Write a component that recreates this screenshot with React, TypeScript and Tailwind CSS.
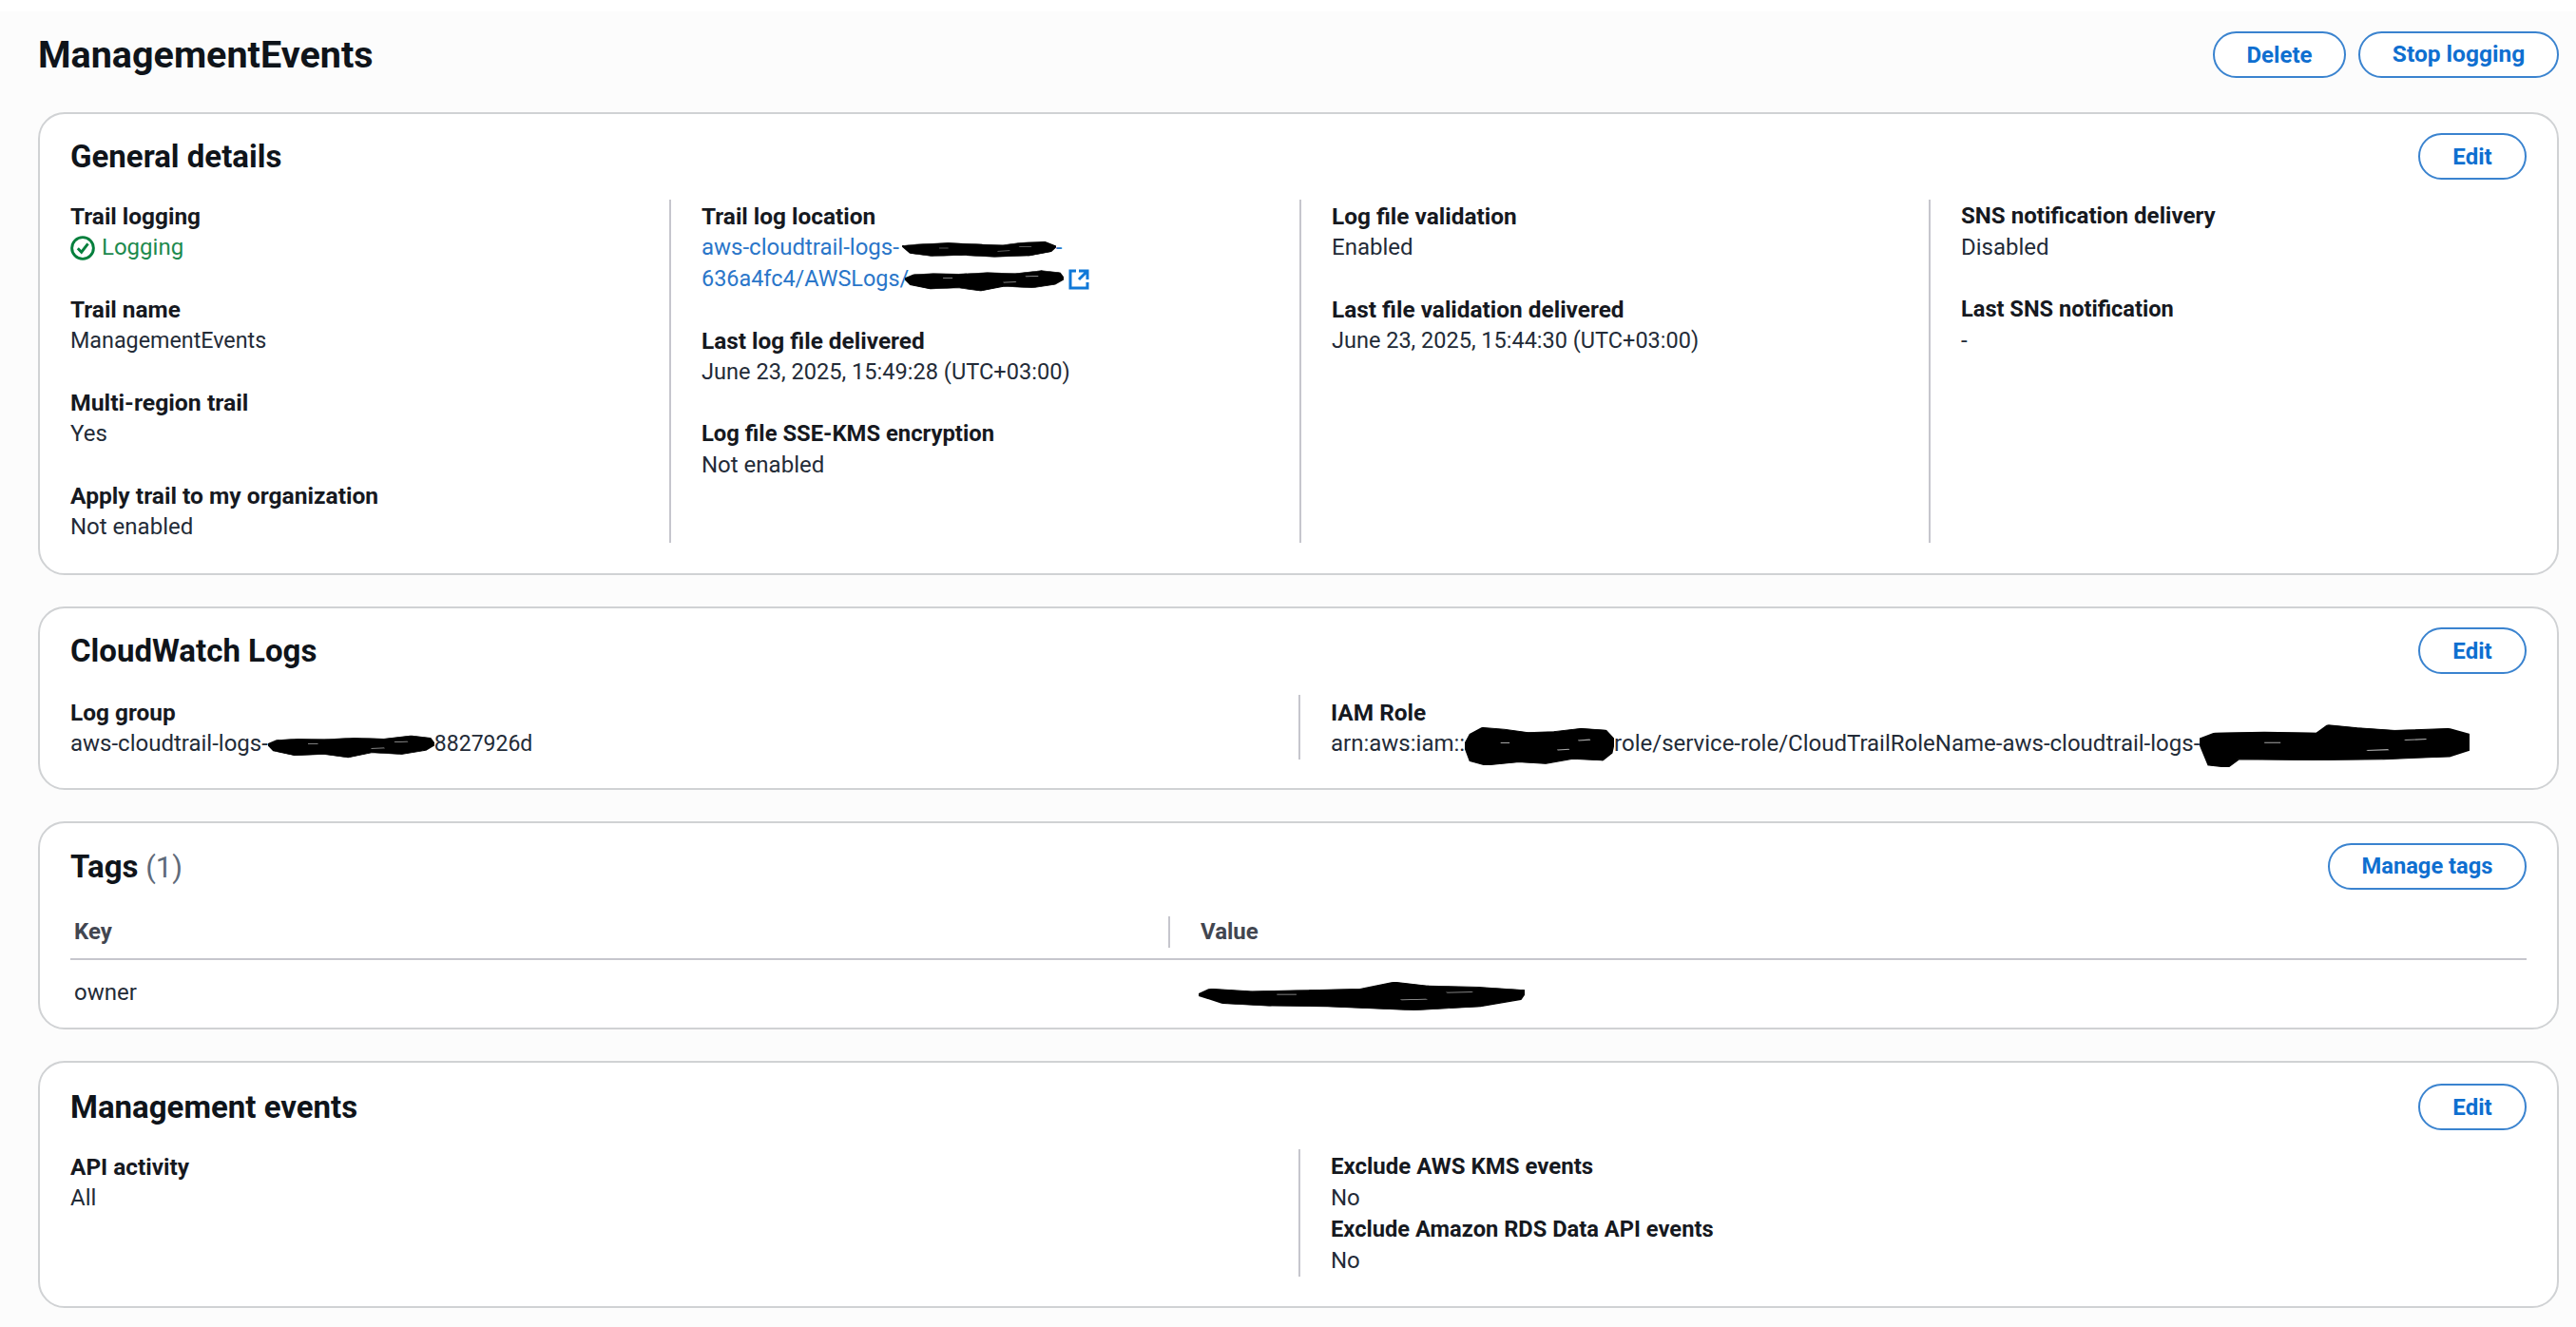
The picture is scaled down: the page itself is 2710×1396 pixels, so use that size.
import React from "react";

const FONT = "font-['Roboto','Noto_Sans',sans-serif]";

function Btn({ children, w, text = "text-[24px]" }: { children: React.ReactNode; w: string; text?: string }) {
  return (
    <button className={`${w} h-[49px] shrink-0 rounded-full border-2 border-[#3a83cf] bg-white ${text} font-bold leading-none text-[#0f6fd0]`}>
      {children}
    </button>
  );
}

function Field({ label, labelClass = "text-[24.4px]", children }: { label: string; labelClass?: string; children: React.ReactNode }) {
  return (
    <div>
      <div className={`${labelClass} font-bold leading-[33px] text-[#16191f]`}>{label}</div>
      <div className="text-[24px] leading-[33px] text-[#232b37]">{children}</div>
    </div>
  );
}

const BLOTS = {
  bar: "M0 46 L6 30 L18 26 L34 28 L52 22 L70 26 L86 14 L97 22 L100 48 L94 70 L80 84 L62 78 L48 96 L34 84 L16 88 L4 72Z",
  cap: "M0 50 L4 22 L12 6 L26 10 L42 18 L60 16 L78 8 L94 12 L100 36 L98 70 L92 88 L72 84 L54 96 L36 92 L14 100 L4 90Z",
  sm: "M0 30 L10 22 L30 14 L52 22 L66 26 L78 12 L92 6 L100 34 L96 66 L82 90 L60 96 L38 86 L20 92 L6 76Z",
  tail: "M0 36 L6 22 L24 20 L44 22 L48 4 L58 10 L72 16 L92 12 L99 24 L100 60 L92 76 L68 82 L42 84 L14 82 L10 100 L4 96 L2 66Z",
  fish: "M0 46 L4 26 L16 34 L34 30 L50 26 L60 4 L70 16 L86 20 L100 30 L98 62 L86 84 L66 96 L40 84 L22 82 L8 74Z",
};

function Blot({ w, h, kind, className = "" }: { w: number; h: number; kind: keyof typeof BLOTS; className?: string }) {
  return (
    <svg
      width={w}
      height={h}
      viewBox="0 0 100 100"
      preserveAspectRatio="none"
      className={`inline-block my-[-12px] align-middle ${className}`}
    >
      <path d={BLOTS[kind]} fill="#000" stroke="#000" strokeWidth="2" strokeLinejoin="round" />
      <path d="M62 62 L70 60 M76 38 L84 36 M24 44 L30 44" stroke="#fff" strokeWidth="2.5" opacity="0.65" fill="none" />
    </svg>
  );
}

function Card({ title, count, action, actionW = "w-[114px]", actionText, children, bottom, top = "pt-5" }: {
  title: string;
  count?: string;
  action: string;
  actionW?: string;
  actionText?: string;
  children: React.ReactNode;
  bottom: string;
  top?: string;
}) {
  return (
    <section className={`rounded-[28px] border-2 border-[#d0d2d4] bg-white px-8 ${top} ${bottom}`}>
      <div className="flex h-[49px] items-center justify-between">
        <h2 className="text-[33px] font-bold leading-none text-[#0f141a]">
          {title}
          {count && <span className="text-[31px] font-normal text-[#5f6b7a]"> {count}</span>}
        </h2>
        <Btn w={actionW} text={actionText}>{action}</Btn>
      </div>
      {children}
    </section>
  );
}

export default function App() {
  return (
    <div className={`${FONT} min-h-[1396px] bg-[#fcfcfc]`}>
      <div className="h-3 bg-white" />
      <div className="pl-10 pr-[18px]">
        <header className="flex h-[49px] items-center justify-between mt-[21px] mb-9">
          <h1 className="text-[39.5px] font-bold leading-none text-[#0f141a]">ManagementEvents</h1>
          <div className="flex gap-[13px]">
            <Btn w="w-[140px]">Delete</Btn>
            <Btn w="w-[211px]" text="text-[24.5px]">Stop logging</Btn>
          </div>
        </header>

        <div className="flex flex-col gap-[33px]">
          <Card title="General details" action="Edit" bottom="pb-[33px]">
            <div className="mt-[21px] grid h-[360px] grid-cols-[630px_663px_662px_1fr]">
              <div className="flex flex-col gap-8 pt-[1px]">
                <div>
                  <div className="text-[24.4px] font-bold leading-[33px] text-[#16191f]">Trail logging</div>
                  <div className="flex items-center gap-[7px] text-[24px] leading-[33px] text-[#1d8a4e]">
                    <svg width="26" height="26" viewBox="0 0 16 16" fill="none" stroke="#037f3c" strokeWidth="1.8">
                      <circle cx="8" cy="8" r="7" />
                      <path d="M4.8 8.2 7.2 10.6 11.4 5.2" />
                    </svg>
                    Logging
                  </div>
                </div>
                <Field label="Trail name"><span className="text-[23.3px]">ManagementEvents</span></Field>
                <Field label="Multi-region trail" labelClass="text-[24.8px]">Yes</Field>
                <Field label="Apply trail to my organization" labelClass="text-[24.6px]">Not enabled</Field>
              </div>
              <div className="flex flex-col gap-8 border-l-2 border-[#c6c6cd] pl-8 pt-[1px]">
                <div>
                  <div className="text-[24.4px] font-bold leading-[33px] text-[#16191f]">Trail log location</div>
                  <div className="text-[24px] leading-[33px] text-[#2a76c9]">
                    <div className="whitespace-nowrap">aws-cloudtrail-logs-<Blot w={162} h={18} kind="sm" className="ml-[3px]" />-</div>
                    <div className="flex items-center whitespace-nowrap">
                      <span className="text-[23.4px]">636a4fc4/AWSLogs/</span><Blot w={167} h={26} kind="bar" className="ml-[-4px]" />
                      <svg width="24" height="24" viewBox="0 0 16 16" fill="none" stroke="#0f78d8" strokeWidth="2" className="ml-[4px]">
                        <path d="M14 8.01v-6H8M14.02 2 8 8.01M6 2.01H2v12h12v-3.99" />
                      </svg>
                    </div>
                  </div>
                </div>
                <Field label="Last log file delivered"><span className="text-[23.6px]">June 23, 2025, 15:49:28 (UTC+03:00)</span></Field>
                <Field label="Log file SSE-KMS encryption" labelClass="text-[23.8px]">Not enabled</Field>
              </div>
              <div className="flex flex-col gap-8 border-l-2 border-[#c6c6cd] pl-8 pt-[1px]">
                <Field label="Log file validation">Enabled</Field>
                <Field label="Last file validation delivered"><span className="text-[23.5px]">June 23, 2025, 15:44:30 (UTC+03:00)</span></Field>
              </div>
              <div className="flex flex-col gap-8 border-l-2 border-[#c6c6cd] pl-8 pt-[1px]">
                <Field label="SNS notification delivery" labelClass="text-[24.1px]">Disabled</Field>
                <Field label="Last SNS notification" labelClass="text-[23.6px]">-</Field>
              </div>
            </div>
          </Card>

          <Card title="CloudWatch Logs" action="Edit" bottom="pb-[32px]">
            <div className="mt-[22px] grid h-[66px] grid-cols-[1292px_1fr]">
              <div className="pt-[2px]">
                <Field label="Log group">
                  <span className="whitespace-nowrap">aws-cloudtrail-logs-<Blot w={175} h={28} kind="bar" /><span className="text-[23px]">8827926d</span></span>
                </Field>
              </div>
              <div className="border-l-2 border-[#c6c6cd] pl-8 pt-[2px]">
                <Field label="IAM Role">
                  <span className="whitespace-nowrap">
                    arn:aws:iam::<Blot w={157} h={42} kind="cap" />role/service-role/CloudTrailRoleName-aws-cloudtrail-logs-<Blot w={284} h={46} kind="tail" />
                  </span>
                </Field>
              </div>
            </div>
          </Card>

          <Card title="Tags" count="(1)" action="Manage tags" actionW="w-[209px]" actionText="text-[23.7px]" bottom="pb-[18px]" top="pt-[21px]">
            <div className="mt-[28px] grid h-[46px] grid-cols-[1151px_1fr] border-b-2 border-[#c6c6cd] pl-[4px] pb-[11px] text-[24px] font-bold leading-[33px] text-[#424650]">
              <div>Key</div>
              <div className="border-l-2 border-[#c6c6cd] pl-8">Value</div>
            </div>
            <div className="grid grid-cols-[1151px_1fr] pl-[4px] pt-[17px] text-[24px] leading-[33px] text-[#232b37]">
              <div className="pt-[1px]">owner</div>
              <div className="pl-[32px] pt-[3px]"><Blot w={343} h={32} kind="fish" /></div>
            </div>
          </Card>

          <Card title="Management events" action="Edit" bottom="pb-[35px]" top="pt-[22px]">
            <div className="mt-5 grid h-[130px] grid-cols-[1292px_1fr]">
              <div className="pt-[2px]"><Field label="API activity">All</Field></div>
              <div className="border-l-2 border-[#c6c6cd] pl-8 pt-[2px]">
                <Field label="Exclude AWS KMS events" labelClass="text-[24px]">No</Field>
                <Field label="Exclude Amazon RDS Data API events" labelClass="text-[23.7px]">No</Field>
              </div>
            </div>
          </Card>
        </div>
      </div>
    </div>
  );
}
